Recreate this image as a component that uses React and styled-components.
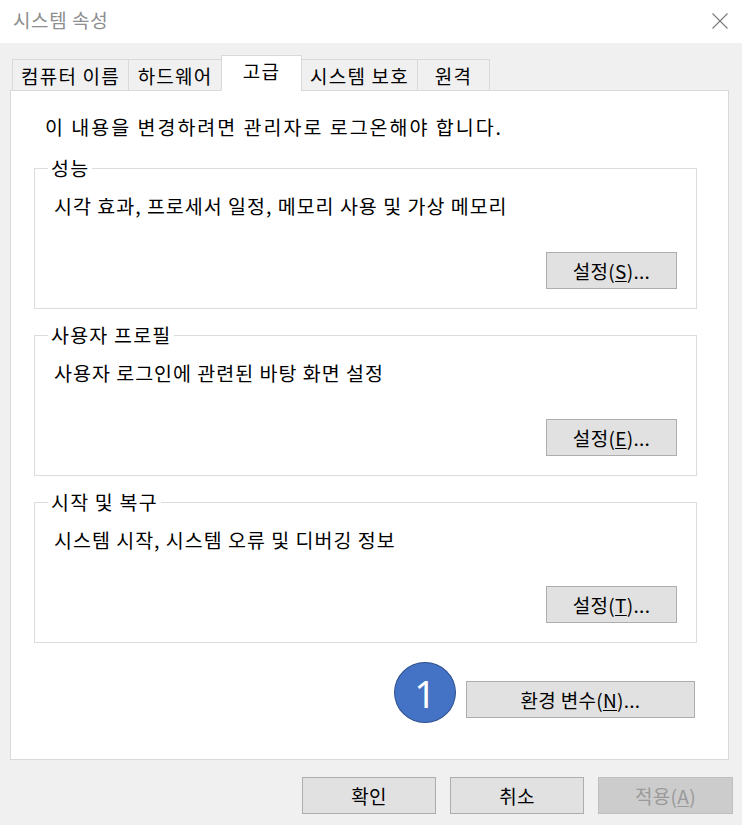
import React from 'react';
import styled, { createGlobalStyle } from 'styled-components';

const GlobalStyle = createGlobalStyle`
  html, body {
    margin: 0;
    padding: 0;
    background: #f0f0f0;
  }
  body {
    font-family: "Noto Sans CJK KR", "Noto Sans", sans-serif;
    color: #000;
  }
`;

const Window = styled.div`
  width: 742px;
  height: 825px;
  background: #f0f0f0;
  display: flex;
  flex-direction: column;
  overflow: hidden;
`;

const TitleBar = styled.div`
  height: 43px;
  flex: none;
  background: #fff;
  display: flex;
  align-items: center;
  justify-content: space-between;
  padding: 0 14px 4px 13px;
  box-sizing: border-box;
`;

const TitleText = styled.span`
  font-size: 19px;
  color: #8e8e8e;
  letter-spacing: 0.6px;
`;

const CloseIcon = styled.svg`
  width: 16px;
  height: 16px;
  margin-top: 2px;
`;

const Body = styled.div`
  flex: 1;
  display: flex;
  flex-direction: column;
  padding: 13px 13px 0 10px;
`;

const TabList = styled.div`
  display: flex;
  align-items: flex-end;
  height: 35px;
  padding-left: 3px;
  position: relative;
  z-index: 1;
  margin-bottom: -1px;
`;

const Tab = styled.div`
  box-sizing: border-box;
  height: ${({ $active }) => ($active ? '36px' : '32px')};
  width: ${({ $w }) => $w}px;
  background: ${({ $active }) => ($active ? '#fff' : '#f0f0f0')};
  border: 1px solid #d9d9d9;
  border-bottom: ${({ $active }) => ($active ? '1px solid #fff' : '1px solid #d9d9d9')};
  margin-left: -1px;
  font-size: 19px;
  line-height: 1;
  display: flex;
  align-items: ${({ $active }) => ($active ? 'flex-start' : 'center')};
  padding-top: ${({ $active }) => ($active ? '5px' : '0')};
  justify-content: center;
  letter-spacing: 1.2px;
`;

const Panel = styled.div`
  box-sizing: border-box;
  width: 719px;
  height: 670px;
  background: #fff;
  border: 1px solid #d9d9d9;
  padding: 24px 31px 0 23px;
  display: flex;
  flex-direction: column;
`;

const Message = styled.div`
  font-size: 19.5px;
  line-height: 24px;
  padding-left: 11px;
  margin-bottom: 17px;
  letter-spacing: 2px;
`;

const GroupBox = styled.fieldset`
  margin: 0 0 14px 0;
  padding: 14px 19px 19px 19px;
  border: 1px solid #dcdcdc;
  display: flex;
  flex-direction: column;
  min-inline-size: 0;
`;

const GroupTitle = styled.legend`
  font-size: 19.5px;
  line-height: 24px;
  padding: 0 3px;
  margin-left: -6px;
  letter-spacing: 1.2px;
`;

const GroupText = styled.div`
  font-size: 19.5px;
  line-height: 24px;
  margin-bottom: 34px;
  letter-spacing: 1px;
`;

const Button = styled.button`
  box-sizing: border-box;
  width: ${({ $w }) => $w || 131}px;
  height: 37px;
  background: ${({ disabled }) => (disabled ? '#cccccc' : '#e1e1e1')};
  border: 1px solid ${({ disabled }) => (disabled ? '#bfbfbf' : '#adadad')};
  color: ${({ disabled }) => (disabled ? '#9a9a9a' : '#000')};
  font-family: "Noto Sans CJK KR", "Noto Sans", sans-serif;
  font-size: 19px;
  line-height: 1;
  padding: 0;
  letter-spacing: 0.3px;
  display: flex;
  align-items: center;
  justify-content: center;
  flex: none;
`;

const ButtonRow = styled.div`
  display: flex;
  justify-content: flex-end;
  align-items: center;
  gap: ${({ $gap }) => $gap || 0}px;
`;

const EnvRow = styled(ButtonRow)`
  margin-top: 12px;
  margin-right: 2px;
`;

const Marker = styled.div`
  box-sizing: border-box;
  width: 62px;
  height: 61px;
  border-radius: 50%;
  background: #4472c4;
  border: 1.5px solid #2f528f;
  color: #fff;
  font-family: "Noto Sans", "Liberation Sans", sans-serif;
  font-size: 38px;
  line-height: 1;
  display: flex;
  align-items: center;
  justify-content: center;
  transform: translateY(-7px);
`;

const Footer = styled(ButtonRow)`
  margin-top: 17px;
  padding-right: 0;
  margin-right: -4px;
`;

const Key = styled.u`
  text-underline-offset: 2px;
`;

const groups = [
  { title: '성능', text: '시각 효과, 프로세서 일정, 메모리 사용 및 가상 메모리', key: 'S' },
  { title: '사용자 프로필', text: '사용자 로그인에 관련된 바탕 화면 설정', key: 'E' },
  { title: '시작 및 복구', text: '시스템 시작, 시스템 오류 및 디버깅 정보', key: 'T' },
];

const tabs = [
  { label: '컴퓨터 이름', w: 117 },
  { label: '하드웨어', w: 94 },
  { label: '고급', w: 81, active: true },
  { label: '시스템 보호', w: 117 },
  { label: '원격', w: 73 },
];

export default function App() {
  return (
    <>
      <GlobalStyle />
      <Window>
        <TitleBar>
          <TitleText>시스템 속성</TitleText>
          <CloseIcon viewBox="0 0 16 16">
            <path d="M0.5 0.5 L15.5 15.5 M15.5 0.5 L0.5 15.5" stroke="#7a7a7a" strokeWidth="1.1" fill="none" />
          </CloseIcon>
        </TitleBar>
        <Body>
          <TabList>
            {tabs.map((t) => (
              <Tab key={t.label} $w={t.w} $active={t.active}>
                {t.label}
              </Tab>
            ))}
          </TabList>
          <Panel>
            <Message>이 내용을 변경하려면 관리자로 로그온해야 합니다.</Message>
            {groups.map((g) => (
              <GroupBox key={g.title}>
                <GroupTitle>{g.title}</GroupTitle>
                <GroupText>{g.text}</GroupText>
                <ButtonRow>
                  <Button>
                    설정(<Key>{g.key}</Key>)...
                  </Button>
                </ButtonRow>
              </GroupBox>
            ))}
            <EnvRow $gap={10}>
              <Marker>1</Marker>
              <Button $w={229}>
                환경 변수(<Key>N</Key>)...
              </Button>
            </EnvRow>
          </Panel>
          <Footer $gap={14}>
            <Button $w={134}>확인</Button>
            <Button $w={134}>취소</Button>
            <Button $w={135} disabled>
              적용(<Key>A</Key>)
            </Button>
          </Footer>
        </Body>
      </Window>
    </>
  );
}
